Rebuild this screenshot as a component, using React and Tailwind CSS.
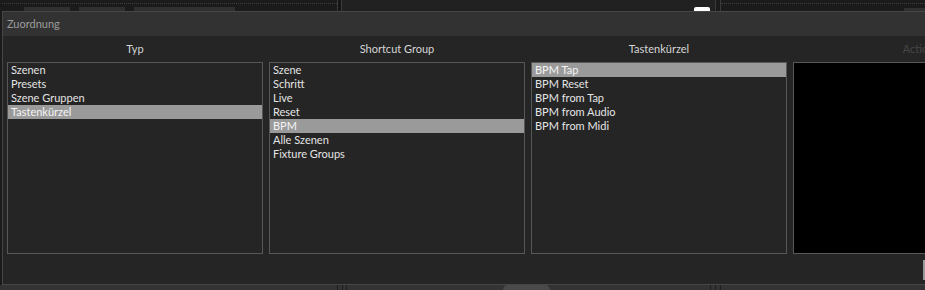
import React from "react";

const columns = [
  {
    titel: "Typ",
    items: ["Szenen", "Presets", "Szene Gruppen", "Tastenkürzel"],
    aktiv: 3,
  },
  {
    titel: "Shortcut Group",
    items: ["Szene", "Schritt", "Live", "Reset", "BPM", "Alle Szenen", "Fixture Groups"],
    aktiv: 4,
  },
  {
    titel: "Tastenkürzel",
    items: ["BPM Tap", "BPM Reset", "BPM from Tap", "BPM from Audio", "BPM from Midi"],
    aktiv: 0,
  },
];

// schmale Leiste oben, gehört zum Hintergrund hinter dem Dialog
const TopStrip = () => (
  <div className="flex h-[11px] w-[925px]">
    <div className="w-[337px] bg-[#1b1b1b] flex flex-col">
      <div className="mt-[3px] ml-[2px] border-t border-dotted border-[#3e3e3e]" />
      <div className="flex mt-[3px] h-[4px]">
        <div className="ml-[24px] w-[46px] bg-[#303030]" />
        <div className="ml-[9px] w-[46px] bg-[#303030]" />
        <div className="ml-[9px] w-[101px] bg-[#303030]" />
      </div>
    </div>
    <div className="w-[1px] bg-[#3a3a3a]" />
    <div className="w-[3px] bg-[#161616]" />
    <div className="w-[1px] bg-[#3a3a3a]" />
    <div className="w-[373px] bg-[#212121] flex items-end">
      <div className="ml-[352px] w-[16px] h-[4px] bg-white rounded-t-[2px]" />
    </div>
    <div className="w-[1px] bg-[#3a3a3a]" />
    <div className="w-[4px] bg-[#1b1b1b]" />
    <div className="w-[1px] bg-[#3a3a3a]" />
    <div className="flex-1 bg-[#1b1b1b] flex flex-col">
      <div className="mt-[3px] border-t border-dotted border-[#3e3e3e]" />
      <div className="flex mt-[4px] h-[3px]">
        <div className="ml-[183px] flex-1 bg-[#303030]" />
      </div>
    </div>
  </div>
);

const BottomStrip = () => (
  <div className="flex h-[5px] w-[925px] bg-[#333333]">
    <div className="ml-[337px] w-[1px] bg-[#1e1e1e]" />
    <div className="ml-[4px] w-[1px] bg-[#1e1e1e]" />
    <div className="ml-[3px] w-[1px] bg-[#1e1e1e]" />
    <div className="ml-[156px] w-[47px] bg-[#4a4a4a] rounded-t-[8px]" />
    <div className="ml-[160px] w-[1px] bg-[#1e1e1e]" />
    <div className="ml-[4px] w-[1px] bg-[#1e1e1e]" />
    <div className="ml-[4px] w-[1px] bg-[#1e1e1e]" />
  </div>
);

const Liste = ({ items, aktiv }) => (
  <div className="h-[192px] border border-[#575757]">
    {items.map((item, i) => (
      <div
        key={item}
        className={`h-[14px] leading-[14px] pl-[3px] text-[11px] ${
          i === aktiv ? "bg-[#9a9a9a] text-[#f4f4f4]" : "text-[#e4e4e4]"
        }`}
      >
        {item}
      </div>
    ))}
  </div>
);

export default function App() {
  return (
    <div
      className="w-[925px] h-[290px] overflow-hidden bg-[#1b1b1b]"
      style={{ fontFamily: 'Lato, "Noto Sans", sans-serif' }}
    >
      <TopStrip />
      <div className="ml-[2px] w-[960px] h-[274px] border border-[#464646] flex flex-col">
        <div className="h-[24px] bg-[#323232] flex items-center pl-[4px] text-[11px] text-[#9c9c9c]">
          Zuordnung
        </div>
        <div className="flex-1 bg-[#252525] pl-[4px]">
          <div className="grid grid-cols-[256px_256px_256px_256px] gap-x-[6px]">
            {columns.map((col) => (
              <div key={col.titel} className="flex flex-col">
                <div className="h-[26px] flex items-center justify-center text-[11px] text-[#d6d6d6]">
                  {col.titel}
                </div>
                <Liste items={col.items} aktiv={col.aktiv} />
              </div>
            ))}
            <div className="flex flex-col">
              <div className="h-[26px] flex items-center justify-center text-[11px] text-[#454545]">
                Actions
              </div>
              <div className="h-[192px] border border-[#575757] bg-black" />
            </div>
          </div>
          <div className="mt-[6px] ml-[916px] h-[20px] w-[20px] border-l-2 border-[#9a9a9a] bg-[#3a3a3a]" />
        </div>
      </div>
      <BottomStrip />
    </div>
  );
}
